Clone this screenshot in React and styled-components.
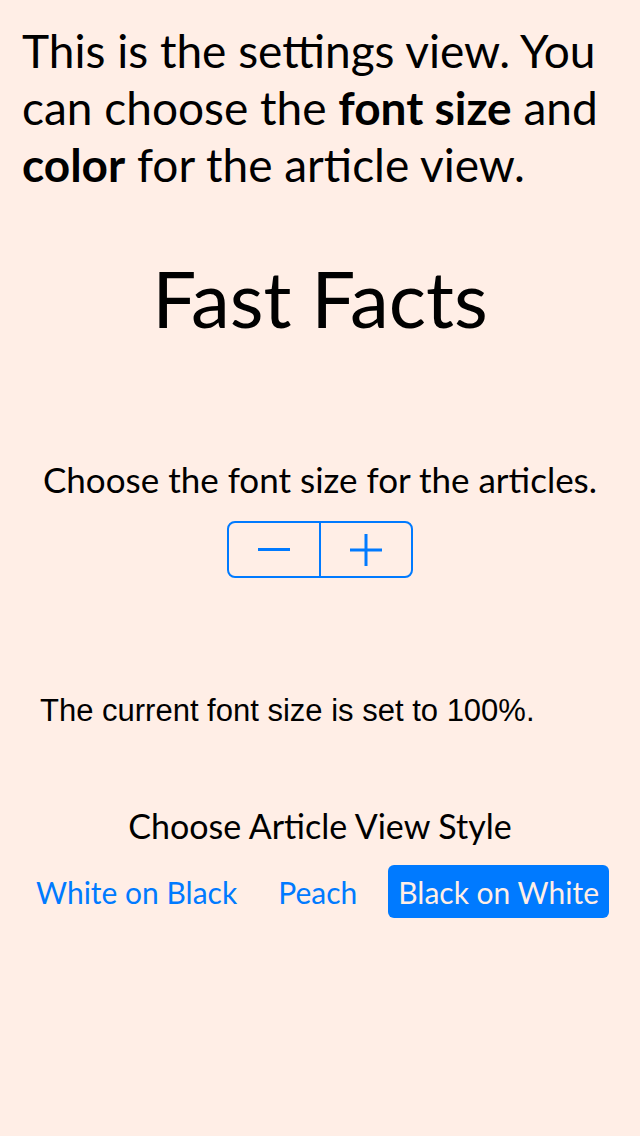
import React, { useState } from 'react'
import styled, { createGlobalStyle } from 'styled-components'

const GlobalStyle = createGlobalStyle`
  html, body {
    margin: 0;
    padding: 0;
    background: #ffeee6;
  }
  body {
    font-family: Lato, 'Open Sans', sans-serif;
    color: #000;
  }
`

const Screen = styled.div`
  width: 640px;
  min-height: 1136px;
  background: #ffeee6;
  display: flex;
  flex-direction: column;
`

const Intro = styled.p`
  margin: 0;
  padding: 22px 10px 0 22px;
  font-size: 46px;
  line-height: 57px;

  b {
    font-weight: 700;
  }
`

const Title = styled.h1`
  margin: 60px 0 0;
  text-align: center;
  font-size: 78px;
  line-height: 90px;
  font-weight: 400;
`

const Label = styled.div`
  margin-top: ${({ top }) => top || 0}px;
  text-align: center;
  font-size: ${({ size }) => size || 34}px;
  line-height: 40px;
`

const Stepper = styled.div`
  align-self: center;
  margin-top: 22px;
  width: 186px;
  height: 57px;
  box-sizing: border-box;
  border: 2px solid #007aff;
  border-radius: 8px;
  display: flex;
`

const StepButton = styled.button`
  flex: 1;
  border: none;
  background: none;
  padding: 0;
  display: flex;
  align-items: center;
  justify-content: center;
  color: #007aff;
  cursor: pointer;

  & + & {
    border-left: 2px solid #007aff;
  }
`

const Status = styled.div`
  margin-top: 115px;
  padding-left: 40px;
  font-family: 'Liberation Sans', Arial, sans-serif;
  font-size: 31px;
  line-height: 36px;
`

const StyleRow = styled.div`
  margin-top: 19px;
  padding: 0 31px 0 26px;
  display: flex;
  justify-content: space-between;
  align-items: center;
`

const StyleOption = styled.button`
  font-family: inherit;
  font-size: 30px;
  height: 53px;
  padding: 0 10px;
  border: none;
  border-radius: 6px;
  cursor: pointer;
  color: ${({ active }) => (active ? '#ffeee6' : '#007aff')};
  background: ${({ active }) => (active ? '#007aff' : 'transparent')};
`

const styles = ['White on Black', 'Peach', 'Black on White']

export default function App() {
  const [size, setSize] = useState(100)
  const [style, setStyle] = useState('Black on White')

  return (
    <Screen>
      <GlobalStyle />
      <Intro>
        This is the settings view. You can choose the <b>font size</b> and <b>color</b> for the article view.
      </Intro>
      <Title>Fast Facts</Title>
      <Label top={116} size={35}>Choose the font size for the articles.</Label>
      <Stepper>
        <StepButton onClick={() => setSize(size - 10)} aria-label="Decrease">
          <svg width="32" height="4" viewBox="0 0 32 4">
            <rect x="0" y="0" width="32" height="3" fill="currentColor" />
          </svg>
        </StepButton>
        <StepButton onClick={() => setSize(size + 10)} aria-label="Increase">
          <svg width="32" height="32" viewBox="0 0 32 32">
            <rect x="0" y="14.5" width="32" height="3" fill="currentColor" />
            <rect x="14.5" y="0" width="3" height="32" fill="currentColor" />
          </svg>
        </StepButton>
      </Stepper>
      <Status>The current font size is set to {size}%.</Status>
      <Label top={77} size={34}>Choose Article View Style</Label>
      <StyleRow>
        {styles.map((s) => (
          <StyleOption key={s} active={s === style} onClick={() => setStyle(s)}>
            {s}
          </StyleOption>
        ))}
      </StyleRow>
    </Screen>
  )
}
